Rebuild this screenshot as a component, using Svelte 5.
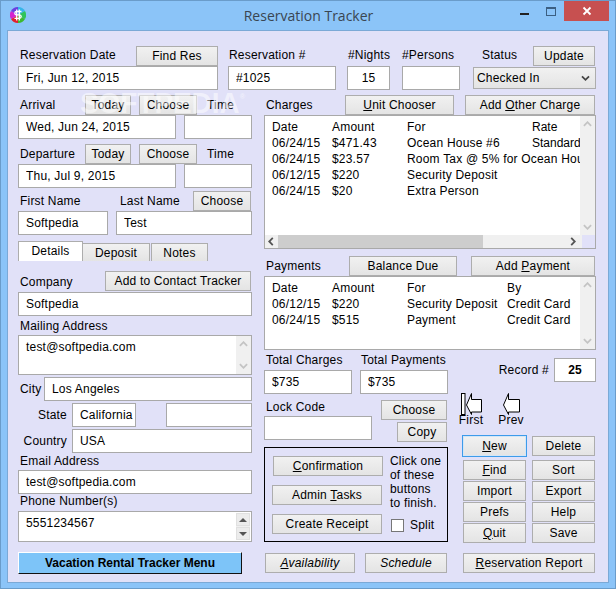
<script>
  const charges = [
    ['Date', 'Amount', 'For', 'Rate'],
    ['06/24/15', '$471.43', 'Ocean House #6', 'Standard'],
    ['06/24/15', '$23.57', 'Room Tax @ 5% for Ocean House #6', ''],
    ['06/12/15', '$220', 'Security Deposit', ''],
    ['06/24/15', '$20', 'Extra Person', '']
  ];
  const payments = [
    ['Date', 'Amount', 'For', 'By'],
    ['06/12/15', '$220', 'Security Deposit', 'Credit Card'],
    ['06/24/15', '$515', 'Payment', 'Credit Card']
  ];
</script>

<div class="win">
  <header class="title">
    <svg class="logo" viewBox="0 0 16 16" width="16" height="16" aria-hidden="true">
      <path d="M8 8V0a8 8 0 0 1 7 4z" fill="#35b5e8" />
      <path d="M8 8l7-4a8 8 0 0 1 0 8z" fill="#2fc45a" />
      <path d="M8 8l7 4a8 8 0 0 1-7 4z" fill="#3cb92f" />
      <path d="M8 8v8a8 8 0 0 1-7-4z" fill="#e0202f" />
      <path d="M8 8l-7 4a8 8 0 0 1 0-8z" fill="#d523d0" />
      <path d="M8 8L1 4a8 8 0 0 1 7-4z" fill="#6a3fe0" />
      <path d="M11.5 4.5H6.5a1.7 1.7 0 0 0 0 3.4h3a1.7 1.7 0 0 1 0 3.4H4.5M6.7 2.5v11M9.3 2.5v11" stroke="#fff" stroke-width="1.3" fill="none" />
    </svg>
    <h1>Reservation Tracker</h1>
    <div class="controls">
      <span class="min"></span>
      <span class="max"></span>
      <span class="close">
        <svg viewBox="0 0 10 10" width="10" height="10" aria-hidden="true"><path d="M1.5 1.5l7 7M8.5 1.5l-7 7" stroke="#fff" stroke-width="1.8" /></svg>
      </span>
    </div>
  </header>

  <main class="client">
    <div class="watermark">SOFTPEDIA<sup>®</sup></div>

    <section class="top">
      <div class="w200">
        <div class="head between"><label for="rd">Reservation Date</label><button class="w82">Find Res</button></div>
        <input id="rd" value="Fri, Jun 12, 2015" />
      </div>
      <div class="w108">
        <div class="head"><label for="rn">Reservation #</label></div>
        <input id="rn" value="#1025" />
      </div>
      <div class="w43">
        <div class="head"><label for="ni">#Nights</label></div>
        <input id="ni" class="center" value="15" />
      </div>
      <div class="w58">
        <div class="head"><label for="pe">#Persons</label></div>
        <input id="pe" value="" />
      </div>
      <div class="w123">
        <div class="head between status"><span>Status</span><button class="w62">Update</button></div>
        <div class="select">Checked In
          <svg viewBox="0 0 10 8" width="9" height="7" aria-hidden="true"><path d="M1 1.5l4 4 4-4" fill="none" stroke="#444" stroke-width="2" /></svg>
        </div>
      </div>
    </section>

    <div class="main">
      <section class="left">
        <div class="head date"><span class="dl">Arrival</span><button class="w46">Today</button><button class="w58b">Choose</button><span class="tl">Time</span></div>
        <div class="pair"><input class="w158" value="Wed, Jun 24, 2015" /><input class="w68" value="" /></div>
        <div class="head date mt5"><span class="dl">Departure</span><button class="w46">Today</button><button class="w58b">Choose</button><span class="tl">Time</span></div>
        <div class="pair"><input class="w158" value="Thu, Jul 9, 2015" /><input class="w68" value="" /></div>

        <div class="head names"><span>First Name</span><span>Last Name</span><button class="w58b">Choose</button></div>
        <div class="pair"><input class="w90" value="Softpedia" /><input class="w136" value="Test" /></div>

        <nav class="tabs"><span class="tab active">Details</span><span class="tab t67">Deposit</span><span class="tab t57">Notes</span></nav>

        <div class="head between company"><span>Company</span><button class="w146">Add to Contact Tracker</button></div>
        <input class="full mt1" value="Softpedia" />
        <div class="cap h19">Mailing Address</div>
        <div class="area mail">test@softpedia.com
          <div class="vbar light"><svg viewBox="0 0 10 6" width="9" height="6" aria-hidden="true"><path d="M1 5l4-4 4 4" fill="none" stroke="#c4c4c4" stroke-width="2" /></svg><svg viewBox="0 0 10 6" width="9" height="6" aria-hidden="true"><path d="M1 1l4 4 4-4" fill="none" stroke="#c4c4c4" stroke-width="2" /></svg></div>
        </div>
        <div class="rowf mt2"><span class="city">City</span><input class="grow" value="Los Angeles" /></div>
        <div class="rowf mt2"><span class="rl">State</span><input class="w64" value="California" /><input class="w86" value="" /></div>
        <div class="rowf mt2"><span class="rl">Country</span><input class="grow" value="USA" /></div>
        <div class="cap h17">Email Address</div>
        <input class="full" value="test@softpedia.com" />
        <div class="cap h17 ph">Phone Number(s)</div>
        <div class="area phone">5551234567
          <div class="spin">
            <span><svg viewBox="0 0 8 4" width="8" height="4" aria-hidden="true"><path d="M0 4l4-4 4 4z" fill="#555" /></svg></span>
            <span><svg viewBox="0 0 8 4" width="8" height="4" aria-hidden="true"><path d="M0 0l4 4 4-4z" fill="#555" /></svg></span>
          </div>
        </div>
        <button class="menu">Vacation Rental Tracker Menu</button>
      </section>

      <section class="right">
        <div class="head rhead c"><span class="rh">Charges</span><button class="w109"><u>U</u>nit Chooser</button><button class="w130">Add <u>O</u>ther Charge</button></div>
        <div class="list charges">
          <div class="rows">
            {#each charges as r}
              <div class="lr"><span class="c1">{r[0]}</span><span class="c2">{r[1]}</span><span class="c3">{r[2]}</span><span class="c4">{r[3]}</span></div>
            {/each}
          </div>
          <div class="vbar light abs"><svg viewBox="0 0 10 6" width="9" height="6" aria-hidden="true"><path d="M1 5l4-4 4 4" fill="none" stroke="#c4c4c4" stroke-width="2" /></svg><svg viewBox="0 0 10 6" width="9" height="6" aria-hidden="true"><path d="M1 1l4 4 4-4" fill="none" stroke="#c4c4c4" stroke-width="2" /></svg></div>
          <div class="hbar">
            <svg viewBox="0 0 6 10" width="6" height="9" aria-hidden="true"><path d="M5 1L1 5l4 4" fill="none" stroke="#555" stroke-width="2" /></svg>
            <span class="thumb"></span>
            <svg viewBox="0 0 6 10" width="6" height="9" aria-hidden="true"><path d="M1 1l4 4-4 4" fill="none" stroke="#555" stroke-width="2" /></svg>
          </div>
        </div>

        <div class="head rhead p"><span class="rh">Payments</span><button class="w108b">Balance Due</button><button class="w124">Add <u>P</u>ayment</button></div>
        <div class="list pays">
          <div class="rows">
            {#each payments as r}
              <div class="lr"><span class="c1">{r[0]}</span><span class="c2">{r[1]}</span><span class="c3b">{r[2]}</span><span>{r[3]}</span></div>
            {/each}
          </div>
          <div class="vbar light abs full-h"><svg viewBox="0 0 10 6" width="9" height="6" aria-hidden="true"><path d="M1 5l4-4 4 4" fill="none" stroke="#c4c4c4" stroke-width="2" /></svg><svg viewBox="0 0 10 6" width="9" height="6" aria-hidden="true"><path d="M1 1l4 4 4-4" fill="none" stroke="#c4c4c4" stroke-width="2" /></svg></div>
        </div>

        <div class="lower">
          <div class="sub">
            <div class="totals">
              <div><div class="cap h20">Total Charges</div><input class="w88" value="$735" /></div>
              <div><div class="cap h20 tp">Total Payments</div><input class="w88" value="$735" /></div>
            </div>
            <div class="lock">
              <div><div class="cap h22">Lock Code</div><input class="w108i" value="" /></div>
              <div class="lockb"><button class="w66">Choose</button><button class="w50">Copy</button></div>
            </div>
            <div class="box">
              <div class="finish">
                <button class="b110 shift"><u>C</u>onfirmation</button>
                <button class="b110">Admin <u>T</u>asks</button>
                <button class="b110">Create Receipt</button>
              </div>
              <div class="note">
                <p>Click one<br />of these<br />buttons<br />to finish.</p>
                <div class="split"><span class="check"></span>Split</div>
              </div>
            </div>
            <div class="bottom">
              <button class="w90b"><i><u>A</u>vailability</i></button>
              <button class="w82"><i>Schedule</i></button>
            </div>
          </div>

          <div class="side">
            <div class="record"><span>Record #</span><input class="rec" value="25" /></div>
            <div class="nav">
              <div class="navi first">
                <svg viewBox="0 0 21 22" width="21" height="22" aria-hidden="true">
                  <rect x="0.5" y="0.5" width="3.5" height="21" fill="#fff" stroke="#000" />
                  <path d="M5.5 12L10.5 .5V6.5H20.5V19H10.5V21.5z" fill="#fff" stroke="#000" />
                </svg>
                <span>First</span>
              </div>
              <div class="navi prev">
                <svg viewBox="0 0 17 22" width="17" height="22" aria-hidden="true">
                  <path d="M.5 12L5.5 .5V6.5H16.5V19H5.5V21.5z" fill="#fff" stroke="#000" />
                </svg>
                <span>Prev</span>
              </div>
            </div>
            <div class="grid">
              <button class="focus"><u>N</u>ew</button><button>Delete</button>
              <button><u>F</u>ind</button><button>Sort</button>
              <button>Import</button><button>Export</button>
              <button>Prefs</button><button>Help</button>
              <button><u>Q</u>uit</button><button>Save</button>
            </div>
            <button class="report"><u>R</u>eservation Report</button>
          </div>
        </div>
      </section>
    </div>
  </main>
</div>

<style>
  :global(body) { margin: 0; }
  .win {
    width: 616px; height: 589px; box-sizing: border-box; overflow: hidden;
    background: #8bc4f8; border: 1px solid #6a9cca;
    font: 12px/14px "Liberation Sans", Arial, sans-serif; color: #000; letter-spacing: .2px;
  }
  .title { height: 29px; display: flex; position: relative; }
  .logo { margin: 6px 0 0 9px; }
  h1 {
    margin: 0; font: 400 14px/30px "Open Sans", sans-serif; color: #3a4652; letter-spacing: 0;
    flex: 1; text-align: center; padding-left: 71px;
  }
  .controls { display: flex; align-items: flex-start; }
  .min { width: 9px; height: 2px; background: #222; margin: 12px 17px 0 0; }
  .max { width: 8px; height: 6px; border: 1px solid #3b5f82; border-top-width: 2px; margin: 6px 8px 0 0; }
  .close { width: 45px; height: 20px; background: #c75050; display: flex; align-items: center; justify-content: center; margin-right: 6px; }

  .client {
    position: relative; margin-left: 6px; width: 602px; height: 553px; box-sizing: border-box;
    border: 1px solid #7ba9d6; background: #e1e1f8; padding: 15px 12px 0 10px;
  }
  .watermark {
    position: absolute; left: 72px; top: 57px; color: rgba(255,255,255,.5); pointer-events: none;
    font: 700 30px/30px "Liberation Sans", sans-serif; letter-spacing: 0; z-index: 2;
    transform: scaleX(.93); transform-origin: left top;
  }
  .watermark sup { font-size: 8px; vertical-align: 14px; line-height: 0; }

  button {
    box-sizing: border-box; height: 20px; padding: 0; margin: 0; flex: none;
    border: 1px solid #adadad; background: linear-gradient(#f1f1f1, #e4e4e4);
    font: inherit; letter-spacing: inherit; color: #000; white-space: nowrap;
  }
  input {
    box-sizing: border-box; height: 24px; padding: 0 0 0 7px; margin: 0; flex: none; min-width: 0;
    border: 1px solid #a9a9a9; background: #fff; border-radius: 0; outline: 0;
    font: inherit; letter-spacing: inherit; color: #000; width: 100%;
  }
  input.center { text-align: center; padding: 0; }

  .top { display: flex; }
  .w200 { width: 200px; margin-right: 10px; }
  .w108 { width: 108px; margin-right: 11px; }
  .w43 { width: 43px; margin-right: 12px; }
  .w58 { width: 58px; margin-right: 13px; }
  .w123 { width: 123px; }
  .head { height: 20px; display: flex; align-items: flex-start; }
  .head > span, .head > label { padding: 2px 0 0 2px; white-space: nowrap; }
  .w108 .head > label, .w43 .head > label { padding-left: 1px; }
  .w58 .head > label { padding-left: 0; }
  .between { justify-content: space-between; }
  .w82 { width: 82px; }
  .w62 { width: 62px; margin-right: 1px; }
  .head.status > span { padding-left: 9px; }
  .select {
    margin-top: 1px; height: 22px; box-sizing: border-box; border: 1px solid #adadad; padding-left: 3px;
    background: linear-gradient(#f1f1f1, #e4e4e4); display: flex; align-items: center; justify-content: space-between;
    padding-right: 5px; line-height: 20px;
  }

  .main { display: flex; gap: 12px; margin-top: 5px; }
  .left { width: 234px; flex: none; }
  .right { width: 332px; flex: none; }
  .date { gap: 8px; }
  .head > .dl { width: 57px; padding-top: 3px; }
  .head > .tl { padding: 3px 0 0 2px; }
  .w46 { width: 46px; }
  .w58b { width: 58px; }
  .pair { display: flex; justify-content: space-between; }
  .w158 { width: 158px; }
  .w68 { width: 68px; }
  .mt5 { margin-top: 5px; }
  .mt1 { margin-top: 1px; }
  .mt2 { margin-top: 2px; }
  .names { margin-top: 3px; display: grid; grid-template-columns: 102px 73px 58px; }
  .head.names > span { padding-top: 3px; }
  .head.names > span:nth-child(2) { padding-left: 0; }
  .w90 { width: 90px; }
  .w136 { width: 136px; }

  .tabs { display: flex; margin-top: 6px; height: 20px; align-items: flex-end; }
  .tab {
    box-sizing: border-box; height: 18px; border: 1px solid #adadad; border-bottom: 0; text-align: center;
    background: linear-gradient(#f1f1f1, #e4e4e4); line-height: 18px;
  }
  .tab.active { width: 65px; height: 20px; background: #fff; line-height: 19px; }
  .t67 { width: 67px; border-left: 0; }
  .t57 { width: 57px; margin-left: 1px; }

  .company { margin-top: 10px; }
  .head.company > span { padding-top: 4px; }
  .w146 { width: 146px; margin-right: 1px; }
  .full { width: 100%; }
  .cap { padding-left: 2px; white-space: nowrap; }
  .tp { padding-left: 1px; }
  .h19 { height: 19px; padding-top: 3px; box-sizing: border-box; }
  .h17 { height: 17px; padding-top: 1px; box-sizing: border-box; }
  .ph { padding-top: 0; }
  .h20 { height: 20px; padding-top: 3px; box-sizing: border-box; }
  .h22 { height: 22px; padding-top: 6px; box-sizing: border-box; }
  .area {
    position: relative; box-sizing: border-box; border: 1px solid #a9a9a9; background: #fff;
    padding: 4px 0 0 7px; white-space: pre-line;
  }
  .mail { height: 40px; }
  .phone { height: 31px; }
  .vbar {
    position: absolute; right: 0; top: 0; bottom: 0; width: 15px; background: #f0f0f0;
    display: flex; flex-direction: column; align-items: center; justify-content: space-between; padding: 5px 0; box-sizing: border-box;
  }
  .abs { bottom: 13px; }
  .full-h { bottom: 0; }
  .spin {
    position: absolute; right: 1px; top: 1px; bottom: 1px; width: 14px; background: #f0f0f0;
    display: flex; flex-direction: column; gap: 1px;
  }
  .spin span { flex: 1; display: flex; align-items: center; justify-content: center; border: 1px solid #e0e0e0; background: #ececec; }
  .rowf { display: flex; }
  .city { width: 26px; padding-left: 2px; padding-top: 5px; box-sizing: border-box; }
  .grow { flex: 1; width: auto; }
  .rl { width: 54px; padding: 5px 5px 0 0; box-sizing: border-box; text-align: right; flex: none; }
  .w64 { width: 64px; }
  .w86 { width: 86px; margin-left: 30px; }
  .menu {
    display: block; margin-top: 10px; width: 224px; height: 22px; font-weight: 700; letter-spacing: 0;
    background: #7dc4f8; border: 1px solid; border-color: #fff #111 #111 #fff;
  }

  .rhead { position: relative; }
  .head > .rh { width: 81px; flex: none; box-sizing: border-box; padding-top: 3px; }
  .c .w109 { width: 109px; margin-right: 11px; }
  .w130 { width: 130px; }
  .p { margin-top: 7px; }
  .head.p > .rh { width: 85px; }
  .w108b { width: 108px; margin-right: 14px; }
  .w124 { width: 124px; }
  .list { position: relative; box-sizing: border-box; border: 1px solid #a9a9a9; background: #fff; overflow: hidden; }
  .charges { height: 134px; }
  .pays { height: 74px; }
  .rows { padding: 3px 0 0 7px; }
  .lr { display: flex; height: 16px; line-height: 16px; white-space: nowrap; }
  .c1 { width: 60px; flex: none; }
  .c2 { width: 75px; flex: none; }
  .c3 { width: 125px; flex: none; }
  .c3b { width: 100px; flex: none; }
  .c4 { width: 60px; flex: none; overflow: hidden; letter-spacing: 0; }
  .hbar {
    position: absolute; left: 0; right: 0; bottom: 0; height: 13px; background: #f0f0f0; padding: 0 19px 0 3px;
    display: flex; align-items: center; box-sizing: border-box;
  }
  .hbar::after { content: ""; position: absolute; right: 0; top: 0; bottom: 0; width: 13px; background: #e1e1f8; }
  .thumb { width: 205px; height: 13px; background: #cdcdcd; margin: 0 auto 0 4px; }

  .lower { display: flex; }
  .sub { width: 184px; flex: none; }
  .totals { display: flex; gap: 8px; }
  .w88 { width: 88px; }
  .lock { display: flex; justify-content: space-between; height: 53px; }
  .w108i { width: 108px; }
  .lockb { display: flex; flex-direction: column; align-items: flex-end; padding-top: 6px; gap: 2px; margin-right: 1px; }
  .w66 { width: 66px; }
  .w50 { width: 50px; }
  .box { box-sizing: border-box; height: 95px; border: 1px solid #000; display: flex; padding: 8px 0 0 7px; }
  .finish { width: 118px; flex: none; display: flex; flex-direction: column; gap: 9px; }
  .b110 { width: 110px; }
  .shift { margin-left: 1px; }
  .note p { margin: -2px 0 0; line-height: 14px; }
  .split { display: flex; align-items: center; margin-top: 8px; padding-left: 1px; }
  .check { width: 13px; height: 13px; box-sizing: border-box; border: 1px solid #777; background: #fff; margin-right: 6px; }
  .bottom { display: flex; margin-top: 11px; padding-left: 1px; }
  .w90b { width: 90px; margin-right: 10px; }

  .side { margin-left: 15px; width: 133px; }
  .record { display: flex; justify-content: flex-end; align-items: center; margin-top: 8px; gap: 5px; }
  .record span { white-space: nowrap; }
  .rec { width: 42px; padding: 0; text-align: center; font-weight: 700; letter-spacing: 0; }
  .nav { display: flex; margin: 11px 0 0 -4px; height: 43px; }
  .navi { display: flex; flex-direction: column; align-items: center; }
  .navi svg { display: block; }
  .navi span { margin-top: -2px; line-height: 14px; }
  .first { width: 24px; }
  .prev { width: 26px; margin-left: 15px; }
  .grid { display: grid; grid-template-columns: 63px 63px; column-gap: 6px; row-gap: 1px; }
  .focus { outline: 1px solid #3d9bea; border-color: #d4e6f6; }
  .grid button:nth-child(-n+2) { margin-bottom: 3px; }
  .report { display: block; margin-top: 10px; width: 132px; }
</style>
